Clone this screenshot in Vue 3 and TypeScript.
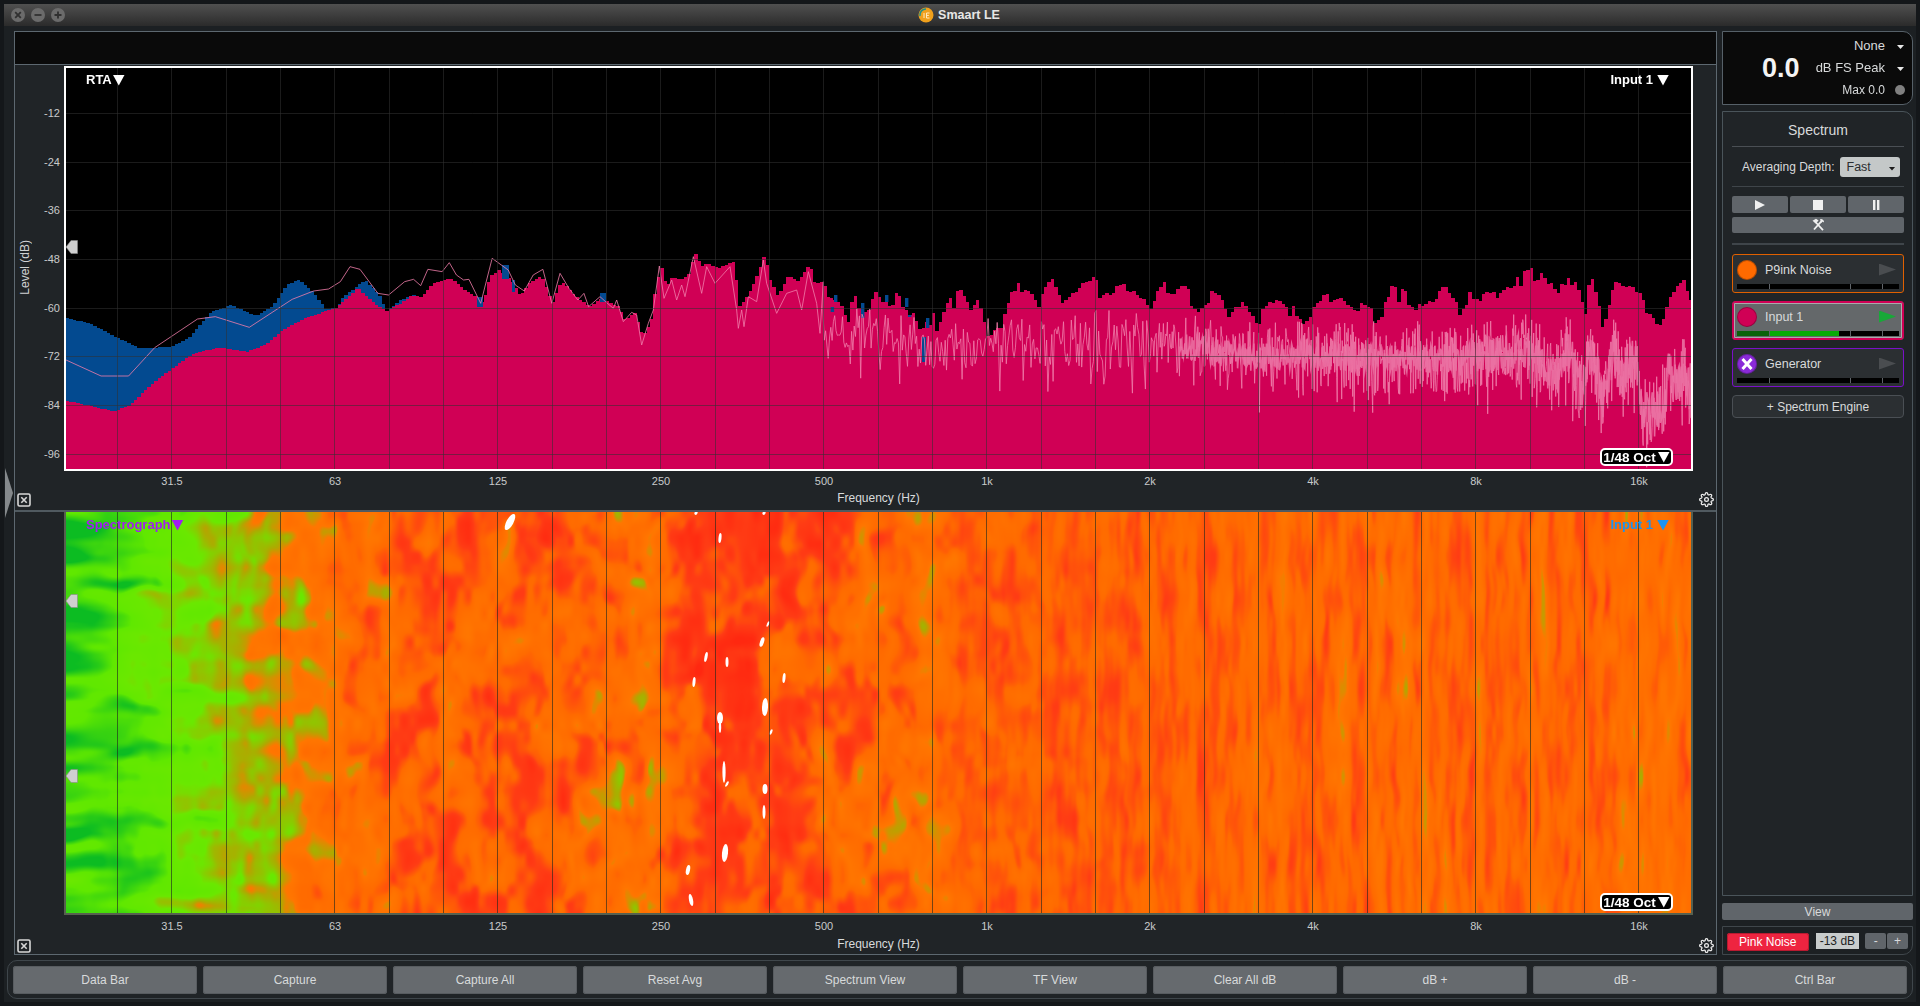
<script setup lang="ts">
import { onMounted, ref } from 'vue'

type Pt = [number, number]

const plots = [
  { id: 'rta', title: 'RTA', color: '#fff', showLevels: true, handles: [240] },
  { id: 'spectro', title: 'Spectrograph', color: '#a11ff0', showLevels: false, handles: [594, 769] },
]
const levels = ['-12', '-24', '-36', '-48', '-60', '-72', '-84', '-96']
const freqs = ['31.5', '63', '125', '250', '500', '1k', '2k', '4k', '8k', '16k']
const bottomButtons = ['Data Bar', 'Capture', 'Capture All', 'Reset Avg', 'Spectrum View', 'TF View', 'Clear All dB', 'dB +', 'dB -', 'Ctrl Bar']
const engines = [
  { name: 'P9ink Noise', cls: 'orange', active: false, off: false },
  { name: 'Input 1', cls: 'crimson', active: true, off: false },
  { name: 'Generator', cls: 'purple', active: false, off: true },
]

const canvases = ref<HTMLCanvasElement[]>([])

// canvas origin on the page
const OX = 66
const OY = 68
const W = 1625
const H = 401

// read off the reference, in crop coordinates: x = ox + zx / sx, y = oy + zy / 3
const crop = (ox: number, oy: number, sx: number, pts: number[]): Pt[] => {
  const out: Pt[] = []
  for (let i = 0; i < pts.length; i += 2) out.push([ox + pts[i] / sx, oy + pts[i + 1] / 3])
  return out
}

const redPts: Pt[] = [
  ...crop(60, 240, 2.8, [17, 483, 80, 497, 145, 515, 190, 497, 250, 435, 310, 385, 370, 340, 440, 323, 520, 335, 570, 315, 620, 270, 680, 235, 770, 203, 830, 143, 880, 195, 910, 212, 950, 190, 980, 167, 1010, 170, 1040, 130, 1090, 115, 1130, 150, 1170, 175, 1180, 190, 1200, 110, 1225, 90, 1260, 120, 1285, 168, 1310, 130, 1345, 108, 1375, 190, 1400, 122, 1440, 170, 1480, 200]),
  ...crop(600, 230, 3, [0, 205, 50, 230, 70, 270, 100, 248, 125, 320, 150, 270, 165, 160, 180, 110, 195, 170, 215, 140, 240, 150, 265, 130, 280, 65, 300, 110, 320, 100, 350, 115, 395, 95, 405, 150, 410, 235, 440, 195, 470, 130, 490, 72, 505, 145, 530, 200, 560, 135, 590, 155, 625, 100, 640, 160, 665, 155, 680, 200, 710, 215, 740, 295, 755, 210, 785, 220, 800, 240, 820, 175, 845, 215, 880, 200, 920, 230, 950, 300, 985, 290, 995, 245, 1005, 320, 1040, 230, 1070, 195, 1090, 200, 1110, 245, 1135, 205, 1160, 310, 1185, 280, 1200, 280]),
  ...crop(1000, 260, 3, [0, 190, 30, 95, 50, 90, 75, 70, 100, 100, 110, 155, 125, 95, 155, 65, 185, 135, 235, 80, 270, 70, 280, 50, 295, 110, 330, 85, 380, 70, 430, 115, 445, 145, 490, 85, 550, 100, 590, 135, 630, 105, 660, 125, 680, 180, 725, 110, 750, 160, 770, 180, 830, 115, 870, 150]),
  ...crop(1300, 270, 3, [0, 150, 50, 95, 110, 65, 180, 115, 235, 150, 255, 65, 300, 75, 370, 125, 430, 60, 490, 140, 510, 65, 570, 90, 630, 40, 720, 5, 770, 90, 800, 10, 850, 120, 870, 25, 905, 165, 940, 20, 1000, 45, 1050, 155, 1080, 160, 1110, 75, 1150, 40, 1175, 110]),
]
const bluePts: Pt[] = crop(60, 240, 2.8, [17, 235, 80, 250, 150, 290, 220, 325, 310, 320, 360, 290, 420, 215, 475, 195, 545, 228, 590, 200, 630, 135, 665, 118, 700, 150, 740, 208, 770, 203, 790, 170, 850, 120, 890, 165, 910, 214, 950, 180, 985, 165, 1010, 175, 1020, 600])
const bluePatches = [[477, 297, 6, 10], [502, 265, 7, 14], [512, 280, 3, 12], [600, 293, 6, 9], [834, 295, 3.4, 7], [830.7, 307, 3.4, 5], [861, 303, 3.4, 15], [885, 295, 3.4, 7], [905, 298, 3.4, 9], [908, 315, 3.4, 2], [922, 337, 4, 25], [926, 318, 3.4, 10]]
const tracePts: Pt[] = [
  ...crop(60, 240, 2.8, [17, 360, 115, 408, 192, 408, 265, 323, 385, 237, 435, 230, 530, 262, 650, 178, 710, 153, 752, 147, 785, 125, 812, 80, 840, 88, 890, 160, 920, 165, 965, 125, 990, 118, 1010, 137, 1030, 88, 1070, 95, 1090, 68, 1110, 105, 1130, 120, 1145, 118, 1178, 190, 1210, 55, 1255, 90, 1275, 135, 1300, 153, 1325, 105, 1352, 88, 1377, 190, 1400, 100, 1425, 145, 1450, 180, 1467, 160, 1480, 200]),
  ...crop(600, 230, 3, [0, 200, 20, 218, 40, 235, 50, 210, 70, 275, 95, 247, 110, 255, 125, 345, 145, 280, 160, 240, 178, 108, 192, 205, 215, 150, 230, 210, 245, 165, 255, 200, 280, 80, 305, 190, 320, 110, 345, 160, 390, 110, 410, 240, 415, 295, 425, 240, 432, 290, 445, 200, 470, 215, 490, 90, 500, 160, 530, 250, 560, 190, 590, 180, 605, 240, 625, 125, 650, 220, 660, 310, 670, 155]),
]
const noiseCenter: Pt[] = [[823, 330], [900, 333], [940, 345], [1000, 338], [1150, 342], [1250, 357], [1350, 357], [1450, 360], [1530, 350], [1557, 380], [1567, 347], [1583, 393], [1592, 350], [1603, 403], [1613, 350], [1623, 383], [1633, 357], [1643, 410], [1660, 413], [1670, 370], [1680, 393], [1683, 360], [1691, 393]]
const gridX = Array.from({ length: 30 }, (_, i) => 117.5 + i * 54.33)
const gridY = Array.from({ length: 8 }, (_, i) => 113.3 + i * 48.7)

function lerp(pts: Pt[], x: number) {
  if (x <= pts[0][0]) return pts[0][1]
  for (let i = 1; i < pts.length; i++) {
    if (x <= pts[i][0]) {
      const [x0, y0] = pts[i - 1]
      const [x1, y1] = pts[i]
      return y0 + ((y1 - y0) * (x - x0)) / (x1 - x0 || 1)
    }
  }
  return pts[pts.length - 1][1]
}

function rng(seed: number) {
  let s = seed
  return () => {
    s = (s + 0x6d2b79f5) | 0
    let t = Math.imul(s ^ (s >>> 15), 1 | s)
    t = (t + Math.imul(t ^ (t >>> 7), 61 | t)) ^ t
    return ((t ^ (t >>> 14)) >>> 0) / 4294967296
  }
}

function drawRta(c: HTMLCanvasElement) {
  const g = c.getContext('2d')!
  const r = rng(7)
  g.fillStyle = '#000'
  g.fillRect(0, 0, W, H)

  // 1/48 octave bars, blue average behind the red level
  const step = 163 / 48
  let jitter = 0
  let hold = 0
  for (let x = OX; x < OX + W; x += step) {
    if (hold-- <= 0) {
      jitter = x > 830 ? (r() - 0.5) * 16 : 0
      hold = Math.floor(r() * 3)
    }
    const red = lerp(redPts, x) + jitter
    const blue = x < 436 ? lerp(bluePts, x) : 999
    const px = Math.round(x - OX)
    const w = Math.round(x + step - OX) - px
    if (blue < red) {
      g.fillStyle = '#034a90'
      g.fillRect(px, Math.round(blue - OY), w, H)
    }
    g.fillStyle = '#d00055'
    g.fillRect(px, Math.round(red - OY), w, H)
  }
  g.fillStyle = '#034a90'
  for (const [x, y, w, h] of bluePatches) g.fillRect(x - OX, y - OY, w, h)

  // measured trace: a single line at the low end, a noisy mass above 500 Hz
  g.strokeStyle = 'rgba(240,125,170,.8)'
  g.lineWidth = 1
  g.beginPath()
  tracePts.forEach(([x, y], i) => (i ? g.lineTo(x - OX, y - OY) : g.moveTo(x - OX, y - OY)))
  let x = 823
  while (x < OX + W) {
    const amp = 24 + Math.min(14, (x - 823) / 40)
    const sign = r() > 0.5 ? 1 : -1
    let d = sign * Math.pow(r(), 1.4) * amp
    if (r() > 0.95) d = 26 + r() * 34
    g.lineTo(x - OX, lerp(noiseCenter, x) + d - OY)
    x += x > 1300 ? 0.5 : x > 1150 ? 0.8 : 1.3
  }
  g.stroke()

  // dense core of the trace at the top end
  g.strokeStyle = 'rgba(234,112,162,.9)'
  g.lineWidth = 1.6
  g.beginPath()
  g.moveTo(1180 - OX, lerp(noiseCenter, 1180) - OY)
  for (let px = 1180; px < OX + W; px += 0.6) {
    const spread = 14 + Math.max(0, px - 1400) / 22
    g.lineTo(px - OX, lerp(noiseCenter, px) + (r() - 0.5) * spread * 2 - OY)
  }
  g.stroke()

  g.strokeStyle = 'rgba(50,50,50,.55)'
  g.lineWidth = 1
  g.beginPath()
  for (const gx of gridX) {
    g.moveTo(Math.floor(gx - OX) + 0.5, 0)
    g.lineTo(Math.floor(gx - OX) + 0.5, H)
  }
  for (const gy of gridY) {
    g.moveTo(0, Math.floor(gy - OY) + 0.5)
    g.lineTo(W, Math.floor(gy - OY) + 0.5)
  }
  g.stroke()
}

function makeNoise(seed: number, sx: number, sy: number) {
  const r = rng(seed)
  const size = 256
  const table = Array.from({ length: size * size }, () => r())
  const smooth = (t: number) => t * t * (3 - 2 * t)
  return (x: number, y: number) => {
    const u = x / sx
    const v = y / sy
    const iu = Math.floor(u)
    const iv = Math.floor(v)
    const fu = smooth(u - iu)
    const fv = smooth(v - iv)
    const at = (a: number, b: number) => table[(a & 255) * size + (b & 255)]
    const top = at(iu, iv) * (1 - fu) + at(iu + 1, iv) * fu
    const bot = at(iu, iv + 1) * (1 - fu) + at(iu + 1, iv + 1) * fu
    return top * (1 - fv) + bot * fv - 0.5
  }
}

const heatBase: Pt[] = [[65, 0.1], [120, 0.13], [170, 0.25], [230, 0.34], [275, 0.45], [330, 0.56], [420, 0.7], [560, 0.72], [620, 0.6], [650, 0.58], [690, 0.78], [780, 0.78], [830, 0.7], [900, 0.62], [925, 0.56], [960, 0.68], [1100, 0.7], [1300, 0.64], [1500, 0.64], [1692, 0.62]]
const palette: [number, number, number, number][] = [
  [0, 12, 188, 34],
  [0.18, 96, 232, 0],
  [0.3, 106, 232, 0],
  [0.43, 176, 168, 0],
  [0.5, 255, 118, 0],
  [0.65, 255, 106, 0],
  [0.82, 255, 60, 20],
  [1, 255, 40, 16],
]

function drawSpectro(c: HTMLCanvasElement) {
  const g = c.getContext('2d')!
  const img = g.createImageData(W, H)
  const wide = makeNoise(3, 70, 14)
  const wide2 = makeNoise(13, 30, 8)
  const mid = makeNoise(5, 19, 26)
  const mid2 = makeNoise(6, 8, 14)
  const thin = makeNoise(9, 7, 44)
  const thin2 = makeNoise(10, 4, 22)
  const stripe = makeNoise(11, 9, 4000)
  const warpX = makeNoise(21, 26, 26)
  const warpY = makeNoise(22, 26, 26)
  const clamp = (v: number) => Math.max(0, Math.min(1, v))

  for (let py = 0; py < H; py++) {
    for (let px = 0; px < W; px++) {
      const x = px + OX
      const wa = clamp(1 - (x - 65) / 340)
      const wc = clamp((x - 850) / 400)
      const wb = clamp(1 - wa - wc)
      const dx = warpX(px, py)
      const dy = warpY(px, py)
      let v = lerp(heatBase, x)
      v += wa * (wide(px + dx * 20, py + dy * 8) * 0.36 + wide2(px, py) * 0.12)
      v += wb * (mid(px + dx * 14, py + dy * 16) * 0.36 + mid2(px + dx * 8, py + dy * 10) * 0.2)
      v += wc * (thin(px + dx * 4, py) * 0.24 + thin2(px + dx * 3, py) * 0.12 + stripe(px, 0) * 0.14)
      v = clamp(v)
      let k = 1
      while (k < palette.length - 1 && v > palette[k][0]) k++
      const [a, r0, g0, b0] = palette[k - 1]
      const [b, r1, g1, b1] = palette[k]
      const t = (v - a) / (b - a)
      const i = (py * W + px) * 4
      img.data[i] = r0 + (r1 - r0) * t
      img.data[i + 1] = g0 + (g1 - g0) * t
      img.data[i + 2] = b0 + (b1 - b0) * t
      img.data[i + 3] = 255
    }
  }
  g.putImageData(img, 0, 0)

  // clipped peaks in white: x, y, half width, half height, tilt
  const spots = [[510, 522, 3.5, 9, 0.5], [720, 538, 1.5, 5, 0.1], [768, 624, 1, 3, 0.4], [762, 642, 2, 5, 0.3], [706, 657, 1.5, 5, 0.2], [727, 662, 1.5, 5, 0], [694, 682, 1.5, 5, 0.1], [784, 678, 1.5, 5, 0.1], [765, 707, 3, 9, 0.05], [720, 718, 3, 6, 0], [720, 727, 1.2, 6, 0], [771, 732, 1.2, 3, 0.4], [724, 772, 1.6, 11, 0], [727, 784, 1.2, 3, 0.5], [765, 789, 2.5, 5, 0], [764, 812, 1.5, 7, 0], [725, 853, 3, 9, 0.1], [688, 870, 2, 5, 0.2], [691, 900, 2, 6, -0.2], [696, 513, 1.5, 2, 0.4], [764, 513, 1.5, 2, 0.4]]
  g.fillStyle = '#fff'
  for (const [x, y, rx, ry, tilt] of spots) {
    g.beginPath()
    g.ellipse(x - OX, y - 512, rx, ry, tilt, 0, Math.PI * 2)
    g.fill()
  }

  g.strokeStyle = 'rgba(30,40,30,.62)'
  g.lineWidth = 1
  g.beginPath()
  for (const gx of gridX) {
    g.moveTo(Math.floor(gx - OX) + 0.5, 0)
    g.lineTo(Math.floor(gx - OX) + 0.5, H)
  }
  g.stroke()
}

onMounted(() => {
  for (const c of canvases.value) {
    if (c.dataset.kind === 'rta') drawRta(c)
    else drawSpectro(c)
  }
})
</script>

<template>
  <div class="window">
    <header class="titlebar">
      <div class="lights">
        <span class="light"><svg viewBox="0 0 14 14"><path d="M4.2 4.2l5.6 5.6M9.8 4.2l-5.6 5.6" /></svg></span>
        <span class="light"><svg viewBox="0 0 14 14"><path d="M3.5 7h7" /></svg></span>
        <span class="light"><svg viewBox="0 0 14 14"><path d="M3.5 7h7M7 3.5v7" /></svg></span>
      </div>
      <div class="app-title">
        <svg class="logo" viewBox="0 0 16 16">
          <circle cx="8" cy="8" r="7.5" fill="#f0a01c" />
          <path d="M2 9A6 6 0 0 1 8 2" fill="none" stroke="#1f8f8a" stroke-width="1.6" />
          <path d="M6 6v5M8.5 6v5M8.5 6h3M8.5 8.4h2.4M8.5 11h3" fill="none" stroke="#ffe9bf" stroke-width="1" />
        </svg>
        <span>Smaart LE</span>
      </div>
    </header>

    <div class="content">
      <main class="main">
        <div class="topbar"></div>
        <section v-for="p in plots" :key="p.id" class="panel" :class="p.id">
          <div class="plot-row">
            <div class="y-axis">
              <template v-if="p.showLevels">
                <span class="level-title">Level (dB)</span>
                <span v-for="l in levels" :key="l" class="y-tick">{{ l }}</span>
              </template>
            </div>
            <div class="plot">
              <canvas ref="canvases" :data-kind="p.id" width="1625" height="401"></canvas>
              <div class="plot-label left" :style="{ color: p.color }">{{ p.title }}<i class="caret"></i></div>
              <div class="plot-label right" :style="{ color: p.id === 'rta' ? '#fff' : '#1b93f0' }">Input 1<i class="caret spaced"></i></div>
              <div class="pill">1/48 Oct<i class="caret"></i></div>
              <svg
                v-for="h in p.handles"
                :key="h"
                class="handle"
                viewBox="0 0 12 14"
                :style="{ top: h - (p.id === 'rta' ? 68 : 512) + 'px' }"
              >
                <path d="M0 7L5 0.5H11.5V13.5H5Z" />
              </svg>
            </div>
          </div>
          <div class="x-axis">
            <span v-for="f in freqs" :key="f">{{ f }}</span>
          </div>
          <div class="x-title">
            <svg class="close-box" viewBox="0 0 14 14">
              <rect x="1" y="1" width="12" height="12" rx="1.5" />
              <path d="M4.3 4.3l5.4 5.4M9.7 4.3l-5.4 5.4" />
            </svg>
            <span>Frequency (Hz)</span>
            <svg class="gear" viewBox="0 0 24 24">
              <circle cx="12" cy="12" r="3" />
              <path d="M19.4 15a1.65 1.65 0 0 0 .33 1.82l.06.06a2 2 0 0 1 0 2.83 2 2 0 0 1-2.83 0l-.06-.06a1.65 1.65 0 0 0-1.82-.33 1.65 1.65 0 0 0-1 1.51V21a2 2 0 0 1-2 2 2 2 0 0 1-2-2v-.09A1.65 1.65 0 0 0 9 19.4a1.65 1.65 0 0 0-1.82.33l-.06.06a2 2 0 0 1-2.83 0 2 2 0 0 1 0-2.83l.06-.06a1.65 1.65 0 0 0 .33-1.82 1.65 1.65 0 0 0-1.51-1H3a2 2 0 0 1-2-2 2 2 0 0 1 2-2h.09A1.65 1.65 0 0 0 4.6 9a1.65 1.65 0 0 0-.33-1.82l-.06-.06a2 2 0 0 1 0-2.83 2 2 0 0 1 2.83 0l.06.06a1.65 1.65 0 0 0 1.82.33H9a1.65 1.65 0 0 0 1-1.51V3a2 2 0 0 1 2-2 2 2 0 0 1 2 2v.09a1.65 1.65 0 0 0 1 1.51 1.65 1.65 0 0 0 1.82-.33l.06-.06a2 2 0 0 1 2.83 0 2 2 0 0 1 0 2.83l-.06.06a1.65 1.65 0 0 0-.33 1.82V9a1.65 1.65 0 0 0 1.51 1H21a2 2 0 0 1 2 2 2 2 0 0 1-2 2h-.09a1.65 1.65 0 0 0-1.51 1z" />
            </svg>
          </div>
        </section>
        <i class="drawer-tab"></i>
      </main>

      <aside class="side">
        <div class="meter">
          <div class="meter-value">0.0</div>
          <div class="meter-rows">
            <div class="meter-row">None<i class="drop"></i></div>
            <div class="meter-row">dB FS Peak<i class="drop"></i></div>
            <div class="meter-row small">Max 0.0<i class="dot"></i></div>
          </div>
        </div>

        <div class="spectrum">
          <div class="spec-title">Spectrum</div>
          <div class="avg-row">
            <span>Averaging Depth:</span>
            <div class="select">Fast<i class="drop dark"></i></div>
          </div>
          <div class="transport">
            <button><svg viewBox="0 0 12 10"><path d="M1 0l10 5-10 5z" /></svg></button>
            <button><svg viewBox="0 0 12 10"><path d="M1 0h10v10H1z" /></svg></button>
            <button><svg viewBox="0 0 12 10"><path d="M3 0h2.4v10H3zM7 0h2.4v10H7z" /></svg></button>
          </div>
          <button class="tools">
            <svg viewBox="0 0 14 14">
              <path class="stroke" d="M4 3.5L12 12.2M11 2.6L3 11.5" />
              <path d="M1.5 2.8L5 0.8l2.6 1.6-2.8 3zM9 1.2a3 3 0 0 1 4 3.2L11.6 3.6 10.4 5z" />
            </svg>
          </button>
          <div class="engine-list">
            <div v-for="e in engines" :key="e.name" class="engine" :class="[e.cls, { active: e.active }]">
              <div class="engine-top">
                <span class="ball">
                  <svg v-if="e.off" viewBox="0 0 20 20"><path d="M5.5 5l9 10M14.5 5l-9 10" /></svg>
                </span>
                <span class="engine-name">{{ e.name }}</span>
                <i class="engine-play"></i>
              </div>
              <div class="engine-meter">
                <template v-if="e.active">
                  <i class="lvl-dark"></i>
                  <i class="lvl-green"></i>
                </template>
                <i class="tick" style="left: 32px"></i>
                <i class="tick" style="left: 113px"></i>
                <i class="tick" style="left: 145px"></i>
              </div>
            </div>
            <button class="add-engine">+ Spectrum Engine</button>
          </div>
        </div>

        <button class="view">View</button>
        <div class="generator">
          <button class="pink">Pink Noise</button>
          <span class="gain">-13 dB</span>
          <button class="step">-</button>
          <button class="step">+</button>
        </div>
      </aside>
    </div>

    <footer class="bottom">
      <button v-for="b in bottomButtons" :key="b">{{ b }}</button>
    </footer>
  </div>
</template>

<style>
html,
body {
  margin: 0;
  background: #14171a;
  overflow: hidden;
}
</style>

<style scoped>
* {
  box-sizing: border-box;
}
.window {
  width: 1912px;
  height: 998px;
  margin: 4px;
  background: #1c2023;
  color: #d8dadb;
  font-family: 'Liberation Sans', Arial, sans-serif;
  font-size: 12px;
}
button {
  font-family: inherit;
  color: #d8dadb;
  border: 0;
  padding: 0;
}

/* title bar */
.titlebar {
  position: relative;
  height: 22px;
  background: linear-gradient(#505050, #2b2b2b);
  display: flex;
  align-items: center;
  justify-content: center;
}
.lights {
  position: absolute;
  left: 7px;
  top: 4px;
  display: flex;
  gap: 6px;
}
.light {
  width: 14px;
  height: 14px;
  border-radius: 50%;
  background: #6b6b6b;
}
.light svg {
  display: block;
  stroke: #303030;
  stroke-width: 1.8;
  fill: none;
}
.app-title {
  display: flex;
  align-items: center;
  gap: 4px;
  font-size: 12.5px;
  font-weight: 700;
  color: #e6e6e6;
  margin-right: 2px;
}
.logo {
  width: 16px;
  height: 16px;
}

.content {
  display: flex;
  gap: 5px;
  padding: 5px 3px 0 10px;
}

/* main plots */
.main {
  position: relative;
  width: 1703px;
  height: 924px;
  border: 1px solid #5d6870;
  background: #202427;
}
.topbar {
  height: 33px;
  background: #0a0a0a;
  border-bottom: 1px solid #5d6870;
}
.panel {
  height: 447px;
  border-bottom: 2px solid #505a60;
}
.panel.spectro {
  height: 442px;
  border-bottom: 0;
}
.plot-row {
  display: flex;
}
.rta .plot-row {
  padding-top: 1px;
}
.y-axis {
  position: relative;
  width: 49px;
  height: 403px;
  padding: 23px 4px 0 0;
  display: flex;
  flex-direction: column;
  align-items: flex-end;
}
.y-tick {
  flex: none;
  height: 48.7px;
  line-height: 48.7px;
  font-size: 11px;
  color: #c8cacb;
}
.level-title {
  position: absolute;
  left: 3px;
  top: 174px;
  writing-mode: vertical-rl;
  transform: rotate(180deg);
  font-size: 12px;
  color: #d0d2d3;
}
.plot {
  position: relative;
  width: 1629px;
  height: 405px;
  border: 2px solid #fff;
}
.spectro .plot {
  height: 403px;
  border-color: #56604f;
  border-top: 0;
}
canvas {
  display: block;
  width: 1625px;
  height: 401px;
}
.plot-label {
  position: absolute;
  top: 4px;
  font-size: 13px;
  line-height: 16px;
  font-weight: 700;
  display: flex;
  align-items: center;
}
.spectro .plot-label {
  top: 5px;
}
.plot-label.left {
  left: 20px;
}
.plot-label.right {
  right: 22px;
}
.caret {
  display: inline-block;
  width: 12px;
  height: 11px;
  margin-left: 1px;
  background: currentColor;
  clip-path: polygon(0 0, 100% 0, 50% 100%);
}
.caret.spaced {
  margin-left: 4px;
}
.pill {
  position: absolute;
  left: 1534px;
  bottom: 3px;
  width: 73px;
  height: 18px;
  display: flex;
  align-items: center;
  justify-content: center;
  gap: 1px;
  background: #000;
  color: #fff;
  border: 2px solid #fff;
  border-radius: 5px;
  font-size: 13.5px;
  font-weight: 700;
  white-space: nowrap;
}
.spectro .pill {
  bottom: 2px;
}
.handle {
  position: absolute;
  left: 0;
  width: 12px;
  height: 14px;
  fill: #cfcfcf;
  stroke: #8a8a8a;
  stroke-width: 0.6;
}
.x-axis {
  display: grid;
  grid-template-columns: repeat(10, 163px);
  margin-left: 75.5px;
  height: 20px;
  line-height: 20px;
  text-align: center;
  font-size: 11px;
  color: #c8cacb;
}
.spectro .x-axis {
  height: 22px;
  line-height: 22px;
}
.x-title {
  display: grid;
  grid-template-columns: 49px 1629px auto;
  height: 14px;
  line-height: 14px;
  text-align: center;
  font-size: 12px;
  align-items: start;
}
.close-box {
  width: 14px;
  height: 14px;
  margin: 2px 0 0 2px;
  fill: none;
  stroke: #d8d8d8;
  stroke-width: 1.6;
}
.gear {
  width: 15px;
  height: 15px;
  margin: 1px 0 0 6px;
  fill: none;
  stroke: #eee;
  stroke-width: 2;
}
.drawer-tab {
  position: absolute;
  left: -10px;
  top: 436px;
  width: 8px;
  height: 50px;
  background: #85898c;
  clip-path: polygon(0 0, 100% 50%, 0 100%);
}

/* right column */
.side {
  width: 191px;
  height: 924px;
  display: flex;
  flex-direction: column;
}
.meter {
  height: 74px;
  background: #0a0a0a;
  border: 1px solid #566068;
  border-radius: 0 10px 10px 0;
  display: flex;
  align-items: center;
  padding-left: 39px;
}
.meter-value {
  width: 55px;
  font-size: 27px;
  font-weight: 700;
  color: #f4f4f4;
}
.meter-rows {
  width: 68px;
  display: flex;
  flex-direction: column;
  align-items: flex-end;
  gap: 6px;
  font-size: 13px;
}
.meter-row {
  position: relative;
  line-height: 16px;
  white-space: nowrap;
}
.meter-row.small {
  font-size: 12px;
}
.drop {
  position: absolute;
  right: -19px;
  top: 7px;
  width: 7px;
  height: 4px;
  background: #e8e8e8;
  clip-path: polygon(0 0, 100% 0, 50% 100%);
}
.dot {
  position: absolute;
  right: -20px;
  top: 3px;
  width: 10px;
  height: 10px;
  border-radius: 50%;
  background: #808080;
}

.spectrum {
  height: 785px;
  margin-top: 6px;
  padding: 0 8px 0 9px;
  border: 1px solid #4a545a;
  border-radius: 0 10px 0 0;
  background: #202427;
}
.spec-title {
  height: 35px;
  line-height: 37px;
  text-align: center;
  font-size: 14px;
  border-bottom: 1px solid #4a4f54;
}
.avg-row {
  height: 40px;
  display: flex;
  align-items: center;
  gap: 5px;
  padding-left: 10px;
  border-bottom: 1px solid #3f454a;
  font-size: 12px;
}
.select {
  position: relative;
  width: 60px;
  height: 20px;
  line-height: 20px;
  padding-left: 7px;
  background: #c4c8c8;
  color: #2b2e30;
  border-radius: 3px;
  font-size: 12.5px;
}
.drop.dark {
  right: 4px;
  top: 10px;
  background: #1c1c1c;
}
.transport {
  display: grid;
  grid-template-columns: repeat(3, 1fr);
  gap: 2px;
  margin-top: 9px;
}
.transport button {
  height: 17px;
}
.transport button,
.tools {
  background: #60656a;
  border-radius: 2px;
  display: flex;
  align-items: center;
  justify-content: center;
}
.transport svg {
  width: 12px;
  height: 10px;
  fill: #f0f0f0;
}
.tools {
  width: 100%;
  height: 16px;
  margin-top: 4px;
}
.tools svg {
  width: 14px;
  height: 14px;
  fill: #f0f0f0;
}
.tools .stroke {
  fill: none;
  stroke: #f0f0f0;
  stroke-width: 1.8;
}
.engine-list {
  margin-top: 10px;
  padding-top: 9px;
  border-top: 2px solid #3f454a;
  display: flex;
  flex-direction: column;
  gap: 8px;
}
.engine {
  height: 39px;
  background: #2b2f32;
  border: 1px solid;
  border-radius: 3px;
  padding: 0 4px;
}
.engine.orange {
  border-color: #e06000;
  --ball: #ff6a00;
}
.engine.crimson {
  border-color: #d00055;
  --ball: #d00055;
}
.engine.purple {
  border-color: #7a10c8;
  --ball: #8a2ad8;
}
.engine.active {
  background: #64686a;
  box-shadow: inset 0 0 0 1px #d00055, inset 0 0 0 2px #a8abad;
}
.engine-top {
  height: 29px;
  display: flex;
  align-items: center;
  font-size: 12.5px;
}
.ball {
  width: 20px;
  height: 20px;
  border-radius: 50%;
  background: radial-gradient(circle at 45% 35%, var(--ball), var(--ball) 70%, rgba(0, 0, 0, 0.55) 120%);
  box-shadow: inset 0 0 0 1px rgba(0, 0, 0, 0.25);
  margin-right: 8px;
}
.ball svg {
  display: block;
  stroke: #fff;
  stroke-width: 3;
  fill: none;
}
.engine-name {
  flex: 1;
}
.engine-play {
  width: 17px;
  height: 12px;
  margin-right: 3px;
  background: #4a4d50;
  clip-path: polygon(0 0, 100% 50%, 0 100%);
}
.engine.active .engine-play {
  background: #18a838;
}
.engine-meter {
  position: relative;
  height: 5px;
  background: #000;
}
.engine-meter i {
  position: absolute;
  top: 0;
  height: 5px;
}
.lvl-dark {
  left: 0;
  width: 32px;
  background: #0a620a;
}
.lvl-green {
  left: 32px;
  width: 70px;
  background: #06aa06;
}
.tick {
  width: 1px;
  background: #60656a;
}
.add-engine {
  height: 23px;
  font-size: 12px;
  background: #2b2f32;
  border: 1px solid #4a4f54;
  border-radius: 4px;
}
.view {
  height: 17px;
  margin-top: 7px;
  font-size: 12px;
  background: #60656a;
  border-radius: 2px;
}
.generator {
  height: 29px;
  margin-top: 6px;
  padding: 6px 4px 0 4px;
  display: flex;
  gap: 1px;
  border: 1px solid #3f464b;
  border-radius: 0 0 10px 0;
}
.pink {
  width: 82px;
  height: 18px;
  margin-right: 6px;
  background: #ee2440;
  color: #fff;
  border-radius: 3px;
  font-size: 12px;
  box-shadow: inset 0 0 0 1px #b81a30;
}
.gain {
  width: 44px;
  height: 16px;
  line-height: 16px;
  margin-right: 5px;
  background: #c8cccc;
  color: #222;
  text-align: center;
  font-size: 12px;
}
.step {
  width: 21px;
  height: 16px;
  background: #60656a;
  border-radius: 2px;
  font-size: 12px;
}

/* bottom button row */
.bottom {
  height: 39px;
  margin: 5px 3px 0;
  padding: 5px 5px;
  display: grid;
  grid-template-columns: repeat(10, 1fr);
  gap: 6px;
  background: #202427;
  border: 1px solid #3f464b;
  border-radius: 10px;
}
.bottom button {
  height: 28px;
  background: #666a6e;
  border-radius: 3px;
  font-size: 12px;
  box-shadow: inset 0 0 0 1px #585c60;
}
</style>
